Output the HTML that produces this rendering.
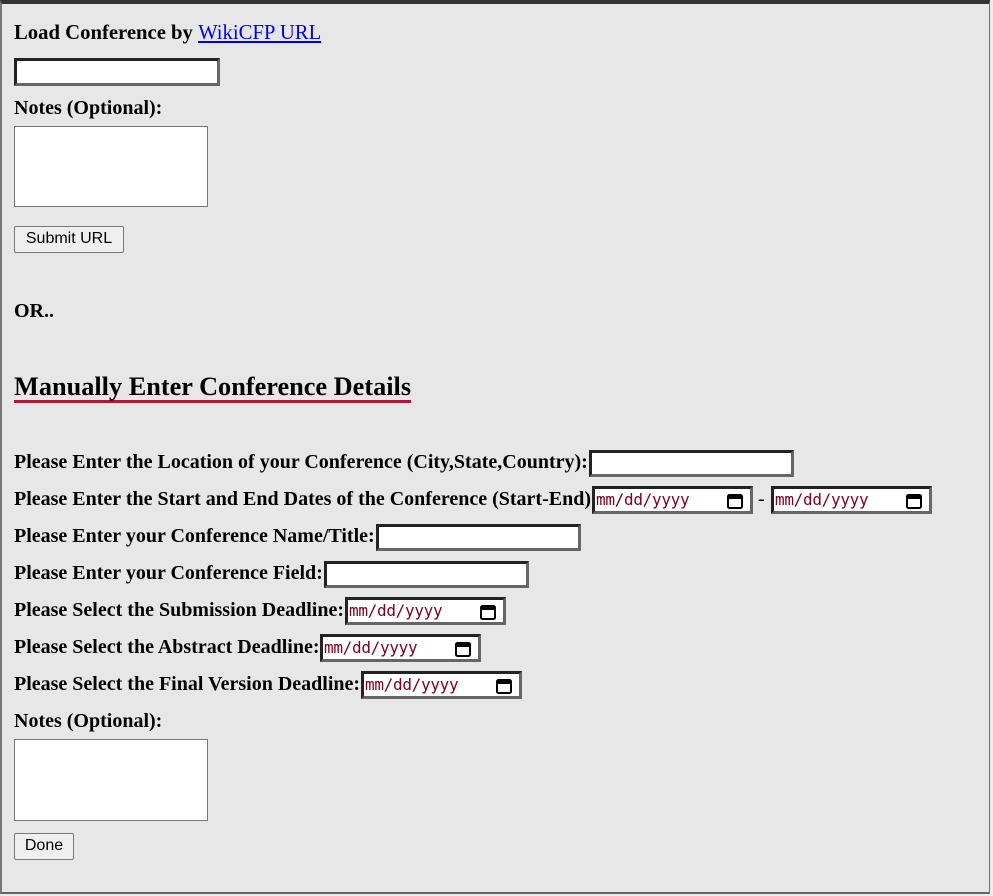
<!DOCTYPE html>
<html><head><meta charset="utf-8"><style>
html,body{margin:0;padding:0;background:#ececec;width:993px;height:896px;overflow:hidden;}
#box{position:absolute;left:0;top:0;background:#e7e7e7;border-top:4px solid #333;border-left:2px solid #777;border-right:1px solid #777;border-bottom:2px solid #666;box-sizing:border-box;width:990px;height:894px;}
.t{position:absolute;font-family:"Liberation Serif",serif;font-weight:bold;font-size:20px;line-height:20px;color:#000;white-space:nowrap;}
a{color:#00e;font-weight:normal;text-decoration:underline;}
.in{position:absolute;background:#fff;border:3px solid;border-color:#222 #666 #666 #222;box-sizing:border-box;height:27px;}
.ta{position:absolute;background:#fff;border:1px solid #777;box-sizing:border-box;}
.btn{position:absolute;background:#efefef;border:1px solid #777;border-radius:2px;box-sizing:border-box;font-family:"Liberation Sans",sans-serif;font-size:16px;text-align:center;line-height:24px;color:#000;}
.dt{position:absolute;background:#fff;border:3px solid;border-color:#222 #666 #666 #222;box-sizing:border-box;width:161px;height:28px;font-family:"DejaVu Sans Mono","Liberation Mono",monospace;font-size:16px;color:#800020;line-height:22px;padding-left:1px;letter-spacing:-0.3px;}
.dt svg{position:absolute;right:5px;top:2px;}
</style></head><body>
<div id="box"></div>
<div class="t" style="left:14px;top:23px;font-size:20.7px;">Load Conference by <a>WikiCFP URL</a></div>
<div class="in" style="left:14px;top:58px;width:206px;height:28px;"></div>
<div class="t" style="left:14px;top:98px;">Notes (Optional):</div>
<div class="ta" style="left:14px;top:126px;width:194px;height:81px;"></div>
<div class="btn" style="left:14px;top:226px;width:110px;height:27px;">Submit URL</div>
<div class="t" style="left:14px;top:301px;">OR..</div>
<div class="t" style="left:14px;top:373px;font-size:26.3px;line-height:27px;border-bottom:3px solid #b0173c;padding-bottom:0px;">Manually Enter Conference Details</div>

<div class="t" style="left:14px;top:452px;">Please Enter the Location of your Conference (City,State,Country):</div>
<div class="in" style="left:589px;top:450px;width:205px;"></div>
<div class="t" style="left:14px;top:489px;">Please Enter the Start and End Dates of the Conference (Start-End)</div>
<div class="dt" style="left:592px;top:486px;">mm/dd/yyyy<svg width="20" height="20" viewBox="0 0 20 20"><rect x="3" y="4" width="14" height="13" rx="1.5" fill="none" stroke="#000" stroke-width="2"/><rect x="3" y="4" width="14" height="4" fill="#000"/></svg></div>
<div class="t" style="left:758px;top:489px;font-weight:normal;">-</div>
<div class="dt" style="left:771px;top:486px;">mm/dd/yyyy<svg width="20" height="20" viewBox="0 0 20 20"><rect x="3" y="4" width="14" height="13" rx="1.5" fill="none" stroke="#000" stroke-width="2"/><rect x="3" y="4" width="14" height="4" fill="#000"/></svg></div>
<div class="t" style="left:14px;top:526px;">Please Enter your Conference Name/Title:</div>
<div class="in" style="left:376px;top:524px;width:205px;"></div>
<div class="t" style="left:14px;top:563px;">Please Enter your Conference Field:</div>
<div class="in" style="left:324px;top:561px;width:205px;"></div>
<div class="t" style="left:14px;top:600px;">Please Select the Submission Deadline:</div>
<div class="dt" style="left:345px;top:597px;">mm/dd/yyyy<svg width="20" height="20" viewBox="0 0 20 20"><rect x="3" y="4" width="14" height="13" rx="1.5" fill="none" stroke="#000" stroke-width="2"/><rect x="3" y="4" width="14" height="4" fill="#000"/></svg></div>
<div class="t" style="left:14px;top:637px;">Please Select the Abstract Deadline:</div>
<div class="dt" style="left:320px;top:634px;">mm/dd/yyyy<svg width="20" height="20" viewBox="0 0 20 20"><rect x="3" y="4" width="14" height="13" rx="1.5" fill="none" stroke="#000" stroke-width="2"/><rect x="3" y="4" width="14" height="4" fill="#000"/></svg></div>
<div class="t" style="left:14px;top:674px;">Please Select the Final Version Deadline:</div>
<div class="dt" style="left:361px;top:671px;">mm/dd/yyyy<svg width="20" height="20" viewBox="0 0 20 20"><rect x="3" y="4" width="14" height="13" rx="1.5" fill="none" stroke="#000" stroke-width="2"/><rect x="3" y="4" width="14" height="4" fill="#000"/></svg></div>
<div class="t" style="left:14px;top:711px;">Notes (Optional):</div>
<div class="ta" style="left:14px;top:739px;width:194px;height:82px;"></div>
<div class="btn" style="left:14px;top:833px;width:60px;height:27px;">Done</div>
</body></html>
